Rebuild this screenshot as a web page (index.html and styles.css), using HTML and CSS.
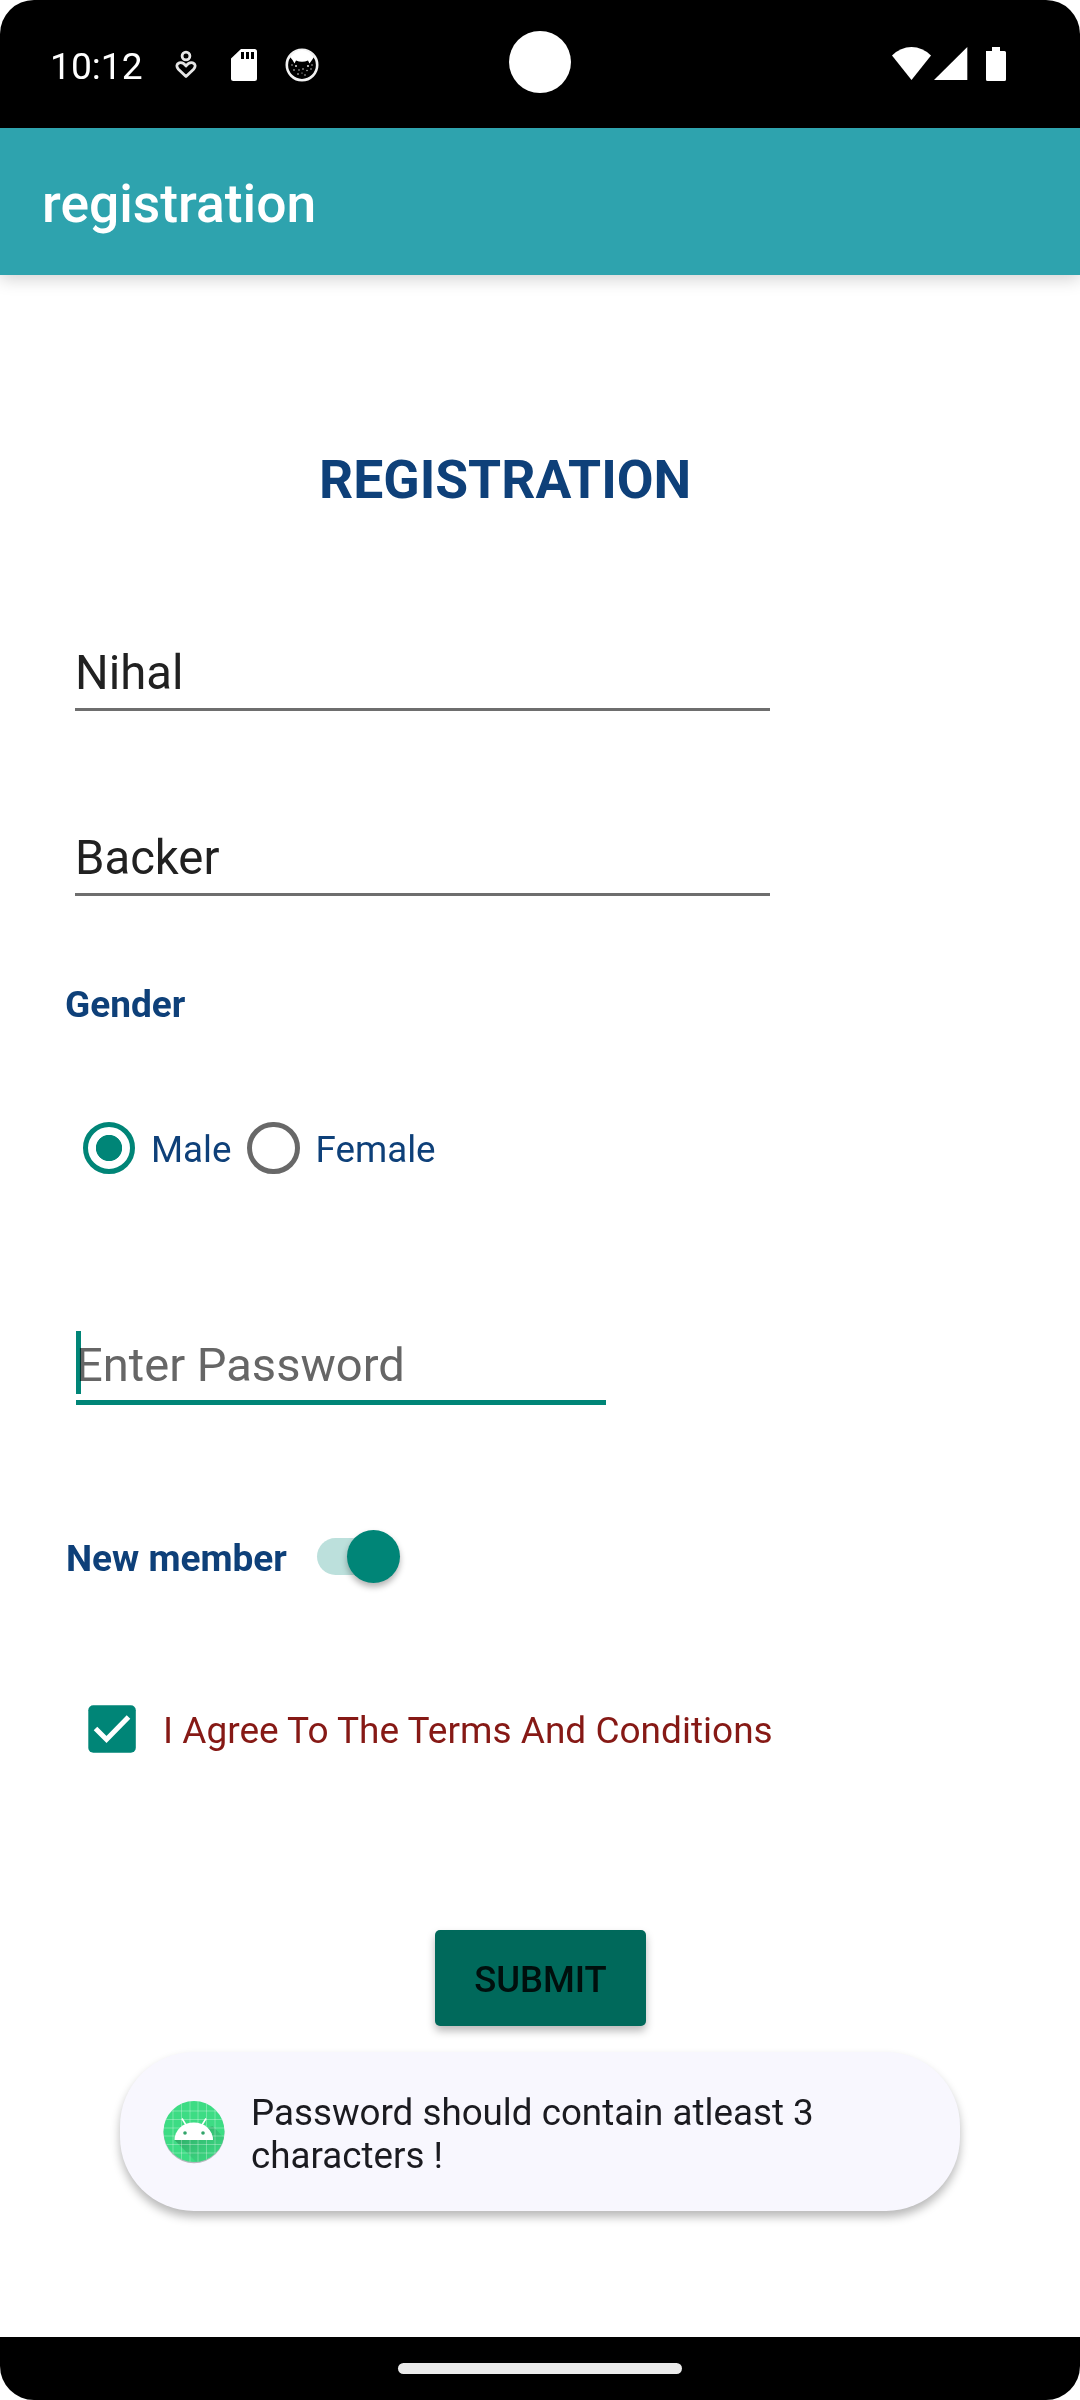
FILE: index.html
```html
<!DOCTYPE html>
<html lang="en">
<head>
<meta charset="utf-8">
<title>registration</title>
<link rel="stylesheet" href="styles.css">
</head>
<body>
<div class="screen">
  <header class="status-bar">
    <span class="clock">10:12</span>
    <svg class="status-heart" viewBox="0 0 22 30" width="22" height="30" fill="none" stroke="#e6e6e6" stroke-width="2.8">
      <circle cx="11" cy="6" r="3.900"/>
      <path d="M11 26.500 L3.400 19.200 C.6 16.200 2 12.800 5.600 12.600 C8 12.500 9.600 14 11 16 C12.400 14 14 12.500 16.400 12.600 C20 12.800 21.400 16.200 18.600 19.200 Z" stroke-linejoin="round"/>
    </svg>
    <svg class="status-card" viewBox="0 0 26 32" width="26" height="32">
      <path fill="#fff" fill-rule="evenodd" d="M10 0H23.500Q26 0 26 2.500V29.500Q26 32 23.500 32H2.500Q0 32 0 29.500V9.500ZM10 3V10H13V3ZM15 3V10H18V3ZM20 3V10H23V3Z"/>
    </svg>
    <svg class="status-cat" viewBox="0 0 34 34" width="34" height="34">
      <circle cx="17" cy="17" r="15.2" fill="#000" stroke="#f2f2f2" stroke-width="2.6"/>
      <path fill="#fff" d="M5 9 Q10 2 17 2 Q24 2 29 9 L27 12 L24.5 15.5 L23 12.5 Q17 15 11 12.5 L9.500 15.500 L7.500 12Z"/>
      <g fill="#ddd">
        <circle cx="11" cy="18" r="1"/><circle cx="23" cy="18" r="1"/><circle cx="7" cy="17" r=".7"/><circle cx="27" cy="17" r=".7"/>
        <circle cx="9" cy="22" r=".8"/><circle cx="14" cy="22" r=".7"/><circle cx="18" cy="21" r=".8"/><circle cx="22" cy="22.500" r=".7"/>
        <circle cx="26" cy="21" r=".7"/><circle cx="13" cy="26" r=".8"/><circle cx="17" cy="25" r=".6"/><circle cx="20" cy="27" r=".7"/>
      </g>
    </svg>
    <span class="camera"></span>
    <svg class="status-signals" viewBox="0 0 115 34" width="115" height="34" fill="#fff">
      <path d="M0 8.500 Q8.500 0 19.500 0 Q30.500 0 39 8.500 L19.500 33Z"/>
      <path d="M42 33 L75.300 0V33Z"/>
      <path d="M94 4H100V0H108V4H112.500Q114 4 114 5.500V32.500Q114 34 112.500 34H95.500Q94 34 94 32.500V5.500Q94 4 94 4Z"/>
    </svg>
  </header>

  <div class="toolbar">registration</div>

  <main class="form">
    <h1 class="heading">REGISTRATION</h1>
    <div class="field first-name">Nihal</div>
    <div class="field last-name">Backer</div>
    <div class="label gender-label">Gender</div>
    <div class="radios">
      <span class="radio checked"></span><span class="radio-text male">Male</span>
      <span class="radio"></span><span class="radio-text">Female</span>
    </div>
    <div class="field password">Enter Password<span class="caret"></span></div>
    <div class="member">
      <span class="label member-label">New member</span>
      <span class="switch"><span class="thumb"></span></span>
    </div>
    <div class="terms">
      <svg class="checkbox" viewBox="0 0 48 48" width="48" height="48">
        <rect x=".3" y=".3" width="47.500" height="47.500" rx="5" fill="#008577"/>
        <path d="M7.500 23.500 L18.500 34.500 L40.500 12" fill="none" stroke="#fff" stroke-width="5"/>
      </svg>
      <span class="terms-text">I Agree To The Terms And Conditions</span>
    </div>
    <div class="submit">SUBMIT</div>
    <div class="toast">
      <svg class="app-icon" viewBox="0 0 64 64" width="64" height="64">
        <defs>
          <clipPath id="disc"><circle cx="32" cy="31.500" r="30.500"/></clipPath>
          <linearGradient id="shade" x1="0" y1="0" x2="1" y2="1"><stop offset="0" stop-color="#2a9b5e"/><stop offset="1" stop-color="#3ddc84" stop-opacity=".3"/></linearGradient>
        </defs>
        <circle cx="32" cy="32.800" r="30.500" fill="#b5b9bd"/>
        <g clip-path="url(#disc)">
          <rect width="64" height="64" fill="#3ddc84"/>
          <path d="M12.500 40 L50.500 26 L68 44 V64H36Z" fill="url(#shade)"/>
          <path d="M11 0V64M19.500 0V64M28 0V64M36 0V64M44.500 0V64M53 0V64M0 11H64M0 19.500H64M0 28H64M0 36H64M0 44.500H64M0 53H64" stroke="#fff" stroke-opacity=".3" stroke-width="1"/>
        </g>
        <path d="M12.500 40 A19.200 17.500 0 0 1 51 40Z" fill="#fff"/>
        <path d="M20 18.500 L24 25M44 18.500 L40 25" stroke="#fff" stroke-width="1.500"/>
        <circle cx="23" cy="33" r="1.800" fill="#32a56a"/><circle cx="41" cy="33" r="1.800" fill="#32a56a"/>
      </svg>
      <p class="toast-text">Password should contain atleast 3<br>characters !</p>
    </div>
  </main>

  <footer class="nav-bar"><span class="home-pill"></span></footer>
</div>
</body>
</html>
```
FILE: styles.css
```css
* { box-sizing: border-box; }

body {
  margin: 0;
  background: #fff;
  font-family: Roboto, sans-serif;
}

.screen {
  display: flex;
  flex-direction: column;
  width: 1080px;
  height: 2400px;
  overflow: hidden;
  border-radius: 34px;
}

.status-bar {
  position: relative;
  display: flex;
  align-items: flex-start;
  height: 128px;
  padding-left: 50px;
  background: #000;
  color: #fff;
}

.clock {
  width: 125px;
  padding-top: 43px;
  font-size: 37.2px;
  line-height: 47px;
}

.status-heart { margin-top: 50px; }
.status-card { margin: 49px 0 0 34px; }
.status-cat { margin: 48px 0 0 28px; }
.status-signals { margin: 47px 73px 0 auto; }

.camera {
  position: absolute;
  top: 31px;
  left: 509px;
  width: 62px;
  height: 62px;
  border-radius: 50%;
  background: #fff;
}

.toolbar {
  height: 147px;
  padding-left: 42px;
  background: #2ea3ae;
  box-shadow: 0 4px 16px rgba(0, 0, 0, .18);
  color: #fff;
  font-size: 53.4px;
  font-weight: 500;
  line-height: 151px;
}

.form {
  display: flex;
  flex-direction: column;
  align-items: flex-start;
  height: 2062px;
}

.heading {
  height: 74px;
  margin: 167px 0 0 319px;
  color: #0e4079;
  font-size: 53.4px;
  font-weight: 700;
  line-height: 75px;
}

.field {
  width: 695px;
  height: 69px;
  margin-left: 75px;
  border-bottom: 3px solid #6e6e6e;
  color: #212121;
  font-size: 47.25px;
  line-height: 62px;
  white-space: nowrap;
}

.first-name { margin-top: 126px; }
.last-name { margin-top: 116px; }

.label {
  color: #0e4079;
  font-size: 37px;
  font-weight: 700;
  line-height: 53px;
  white-space: nowrap;
}

.gender-label { margin: 82px 0 0 65px; }

.radios {
  display: flex;
  align-items: center;
  height: 54px;
  margin: 90px 0 0 82.5px;
}

.radio {
  width: 52.5px;
  height: 52.5px;
  border: 5.5px solid #686868;
  border-radius: 50%;
}

.radio.checked {
  border-color: #008577;
  background: radial-gradient(circle, #008577 12.7px, transparent 13.5px);
}

.radio-text {
  margin: 3px 0 0 16px;
  color: #0e4079;
  font-size: 36.75px;
}

.radio-text.male { width: 96px; }

.password {
  position: relative;
  width: 530px;
  height: 71px;
  margin: 159px 0 0 76px;
  border-bottom: 5px solid #008577;
  color: #666;
  font-size: 47.1px;
}

.caret {
  position: absolute;
  top: -3px;
  left: 0;
  width: 5px;
  height: 63px;
  background: #008577;
  mix-blend-mode: multiply;
}

.member {
  display: flex;
  margin: 125px 0 0 66px;
}

.member-label { width: 251px; padding-top: 2px; }

.switch {
  display: flex;
  align-items: center;
  justify-content: flex-end;
  width: 79px;
  height: 37px;
  margin-top: 8px;
  border-radius: 19px;
  background: #bce0dc;
}

.thumb {
  flex: none;
  width: 53px;
  height: 53px;
  margin-right: -4px;
  border-radius: 50%;
  background: #008577;
  box-shadow: 0 4px 6px rgba(0, 0, 0, .3);
}

.terms {
  display: flex;
  align-items: center;
  height: 52px;
  margin: 118px 0 0 88px;
}

.terms-text {
  margin: 3px 0 0 27px;
  color: #861915;
  font-size: 37.03px;
  white-space: nowrap;
}

.submit {
  width: 211px;
  height: 96px;
  margin: 175px 0 0 435px;
  border-radius: 5px;
  background: #00695b;
  box-shadow: 0 5px 9px rgba(0, 0, 0, .28);
  color: #000f0d;
  font-size: 36.4px;
  font-weight: 500;
  line-height: 99px;
  text-align: center;
}

.toast {
  display: flex;
  align-items: center;
  width: 840px;
  height: 159px;
  margin: 26px 0 0 120px;
  padding-left: 41.5px;
  border-radius: 74px;
  background: #f8f7fe;
  box-shadow: 0 6px 10px rgba(0, 0, 0, .28);
}

.toast-text {
  margin: 5px 0 0 25.5px;
  color: #1b1b20;
  font-size: 36.75px;
  line-height: 43px;
}

.nav-bar {
  display: flex;
  justify-content: center;
  height: 63px;
  padding-top: 26px;
  background: #000;
}

.home-pill {
  width: 284px;
  height: 11px;
  border-radius: 6px;
  background: #ebebeb;
}
```
